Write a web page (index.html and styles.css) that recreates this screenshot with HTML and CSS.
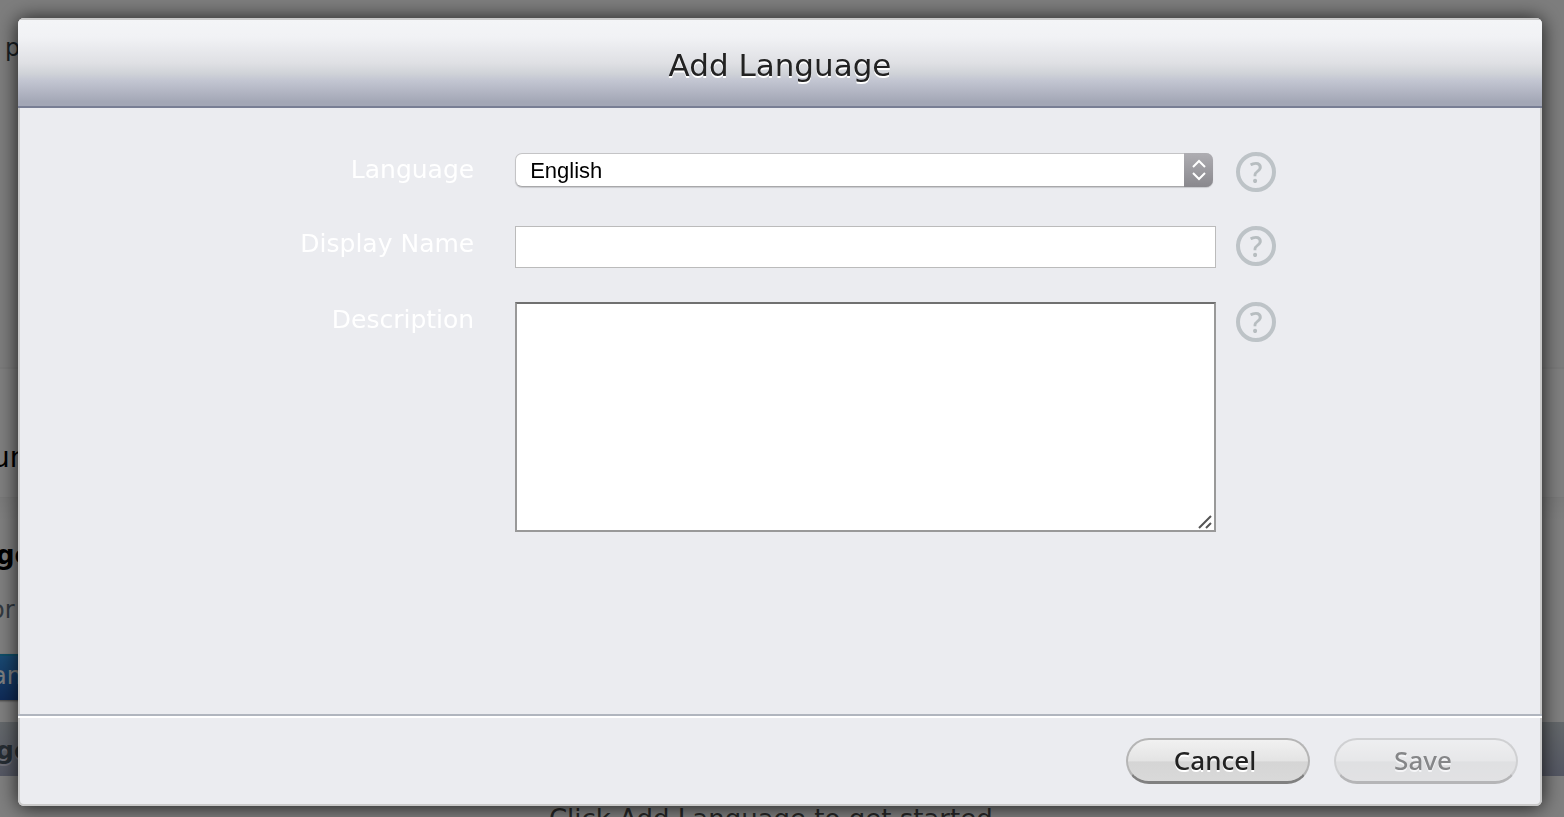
FILE: index.html
```html
<!DOCTYPE html>
<html lang="en">
<head>
<meta charset="UTF-8">
<meta name="viewport" content="width=device-width, initial-scale=1.0">
<title>Add Language</title>
<link rel="stylesheet" href="styles.css">
</head>
<body>
  <div class="page">
    <div class="page-top"><p class="intro">p</p></div>
    <div class="page-band"><h2>un</h2></div>
    <div class="page-main">
      <h3>ge</h3>
      <p class="note">or</p>
      <button type="button" class="page-btn">an</button>
      <div class="page-bar">ge</div>
      <p class="empty">Click Add Language to get started.</p>
    </div>
  </div>

  <div class="overlay">
    <form class="modal" role="dialog" aria-labelledby="modalTitle">
      <header class="modal-header">
        <h1 id="modalTitle">Add Language</h1>
      </header>

      <div class="modal-body">
        <div class="form-row">
          <label for="language">Language</label>
          <div class="select-box">
            <select id="language">
              <option>English</option>
            </select>
            <span class="select-arrow">
              <svg width="14" height="22" viewBox="0 0 14 22"><path d="M1 8L7 2l6 6M1 14l6 6 6-6"/></svg>
            </span>
          </div>
          <button type="button" class="help" aria-label="Help">?</button>
        </div>

        <div class="form-row">
          <label for="displayName">Display Name</label>
          <input type="text" id="displayName">
          <button type="button" class="help" aria-label="Help">?</button>
        </div>

        <div class="form-row">
          <label for="description">Description</label>
          <div class="textarea-box">
            <textarea id="description"></textarea>
            <svg class="grip" width="16" height="16" viewBox="0 0 16 16"><path d="M1 14L13 2M8 14l5-5"/></svg>
          </div>
          <button type="button" class="help" aria-label="Help">?</button>
        </div>
      </div>

      <footer class="modal-footer">
        <button type="button" class="btn">Cancel</button>
        <button type="submit" class="btn" disabled>Save</button>
      </footer>
    </form>
  </div>
</body>
</html>
```

FILE: styles.css
```css
* {
  box-sizing: border-box;
}
body {
  margin: 0;
  height: 100vh;
  overflow: hidden;
  background: #fdfdfd;
  font-family: "DejaVu Sans", sans-serif;
  color: #333;
}
h1, h2, h3, p {
  margin: 0;
  font-weight: normal;
}

/* page behind the dialog */
.page {
  height: 100%;
  overflow: hidden;
}
.page-top {
  height: 367px;
  padding: 32px 5px;
  background: #fafafa;
}
.intro {
  font-size: 24px;
  line-height: 32px;
  color: #333f48;
}
.page-band {
  height: 131px;
  padding-top: 72px;
  background: #fff;
  border-top: 2px solid #f4f4f4;
  border-bottom: 1px solid #f2f2f2;
}
.page-band h2 {
  margin-left: -8px;
  font-size: 28px;
  line-height: 34px;
  color: #000;
}
.page-main {
  padding-top: 40px;
  background: linear-gradient(#f6f6f6, #fff 24px);
}
.page-main h3 {
  margin-left: -4px;
  font-size: 26px;
  font-weight: bold;
  line-height: 34px;
  color: #000;
}
.note {
  margin: 22px 0 28px -10px;
  font-size: 24px;
  line-height: 32px;
  color: #66737f;
}
.page-btn {
  display: block;
  width: 160px;
  height: 46px;
  margin-left: -100px;
  padding: 0 0 4px 92px;
  border: 0;
  border-top: 2px solid #1f9ccf;
  background: linear-gradient(#3494e6, #1f55ae);
  box-shadow: 0 1px 2px rgba(0, 0, 0, 0.5);
  color: #fff;
  font-family: inherit;
  font-size: 24px;
  text-align: left;
}
.page-bar {
  height: 54px;
  margin-top: 22px;
  margin-left: -4px;
  padding-top: 2px;
  background: linear-gradient(#c8d0d6, #a8aec6);
  font-size: 25px;
  font-weight: bold;
  line-height: 54px;
  color: #4d5a66;
  text-shadow: 0 2px 0 #dde;
}
.empty {
  margin-top: 24px;
  padding-right: 14px;
  text-align: center;
  font-size: 26px;
  line-height: 38px;
  color: #4d4d4d;
}

/* dialog */
.overlay {
  position: fixed;
  inset: 0;
  display: flex;
  padding: 18px 22px 11px 18px;
  background: rgba(0, 0, 0, 0.5);
}
.modal {
  flex: 1;
  display: flex;
  flex-direction: column;
  border-radius: 6px;
  overflow: hidden;
  background: #ebecf0;
  box-shadow: 0 1px 20px rgba(0, 0, 0, 0.8), inset 0 0 0 2px #c9c9c9;
}
.modal-header {
  height: 90px;
  border-top: 2px solid #c9c9c9;
  border-bottom: 2px solid #787e94;
  background: linear-gradient(#f4f5f7, #f1f2f5 20%, #dfe0e4 50%, #d0d3d8 62%, #c3c6d2 70%, #a3a7b6 95%);
  text-align: center;
}
.modal-header h1 {
  padding-top: 25px;
  font-size: 31px;
  line-height: 40px;
  color: #222;
  text-shadow: 0 2px 0 #fff;
}
.modal-body {
  flex: 1;
  display: flex;
  flex-direction: column;
  gap: 34px;
  padding-top: 44px;
}
.form-row {
  display: grid;
  grid-template-columns: 30% 46% 40px;
  align-items: start;
}
.form-row label {
  padding-right: 1px;
  font-size: 25px;
  line-height: 36px;
  text-align: right;
  color: #fff;
}
.form-row > :nth-child(2) {
  margin-left: 40px;
  margin-right: -40px;
}
.help {
  width: 40px;
  height: 40px;
  margin-left: 60px;
  padding: 0;
  border: 4px solid #bdc3c7;
  border-radius: 50%;
  background: none;
  font: 600 28px "Open Sans", sans-serif;
  line-height: 30px;
  color: #b7bdc0;
}
.select-box {
  position: relative;
  margin-top: 1px;
  padding-right: 3px;
}
.select-box select {
  display: block;
  width: 100%;
  height: 34px;
  padding: 0 40px 0 14px;
  appearance: none;
  border: 1px solid #c4c4c6;
  border-bottom-color: #a8a8aa;
  border-radius: 7px;
  background: #fff;
  box-shadow: 0 1px 1px rgba(0, 0, 0, 0.15);
  font: 22px "Liberation Sans", sans-serif;
  color: #000;
}
.select-arrow {
  position: absolute;
  top: 0;
  right: 3px;
  width: 29px;
  height: 34px;
  display: flex;
  align-items: center;
  justify-content: center;
  border-radius: 0 7px 7px 0;
  background: linear-gradient(#aeadb2, #89888d);
  pointer-events: none;
}
.select-arrow path {
  fill: none;
  stroke: #fff;
  stroke-width: 2;
}
.form-row input {
  height: 42px;
  border: 1px solid #bbb;
  box-shadow: inset 0 0 0 1px #fff;
  background: #fff;
  font-size: 24px;
}
.textarea-box {
  position: relative;
}
.textarea-box textarea {
  display: block;
  width: 100%;
  height: 230px;
  border: 2px solid #999;
  border-top-color: #707070;
  background: #fff;
  resize: none;
  font-size: 24px;
}
.grip {
  position: absolute;
  right: 2px;
  bottom: 2px;
}
.grip path {
  stroke: #555;
  stroke-width: 2;
}
.modal-footer {
  display: flex;
  justify-content: flex-end;
  gap: 24px;
  padding: 22px 24px;
  border-top: 2px solid #b0b5be;
  box-shadow: inset 0 2px 0 #fff;
}
.btn {
  width: 184px;
  height: 46px;
  padding: 0 6px 2px 0;
  border: 2px solid #b5b5b5;
  border-bottom: 3px solid #808080;
  border-radius: 23px;
  background: linear-gradient(#f1f1f1, #e4e4e4 50%, #d5d5d5 54%, #d9d9d9);
  font: 500 26px "Noto Sans", sans-serif;
  color: #222;
  text-shadow: 0 2px 0 #fff;
}
.btn:disabled {
  opacity: 0.5;
}
```
